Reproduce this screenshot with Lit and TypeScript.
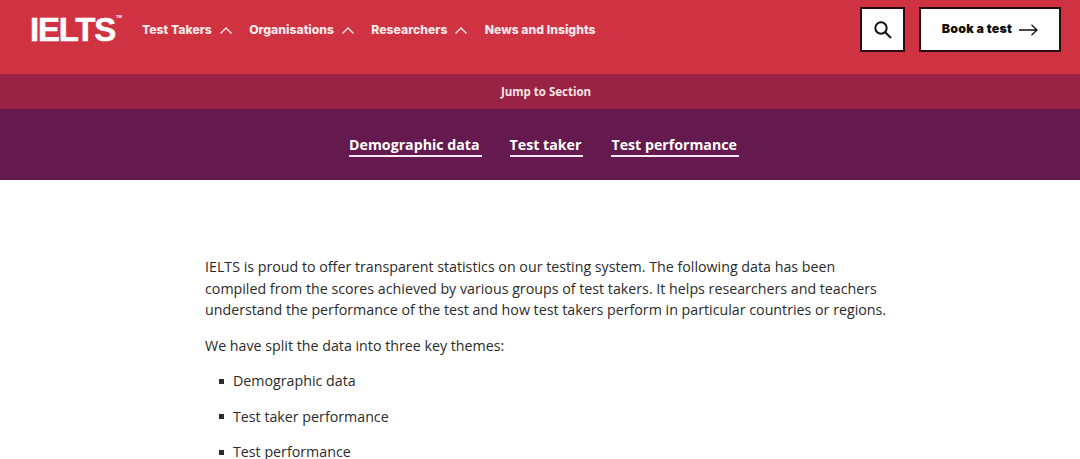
import { LitElement, html, css } from "lit";
import { customElement } from "lit/decorators.js";

const chevron = html`<svg class="chev" width="14" height="9" viewBox="0 0 14 9" fill="none" stroke="#fbe9ea" stroke-width="1.4"><path d="M1.5 7.5 7 2l5.500 5.500"/></svg>`;

@customElement("app-root")
export class AppRoot extends LitElement {
  static styles = css`
    :host { display: block; width: 1080px; height: 459px; overflow: hidden; background: #fff; font-family: "Open Sans", sans-serif; color: #2b2b2b; }
    .top { height: 74px; background: #cf3341; display: flex; align-items: center; padding: 0 19px 0 30px; box-sizing: border-box; }
    .logo { font: 700 33px/1 "Liberation Sans", sans-serif; color: #fff; -webkit-text-stroke: 0.5px #fff; letter-spacing: -1.2px; display: flex; align-items: flex-start; margin-top: -15px; width: 88px; }
    .logo sup { font-size: 4px; line-height: 1; letter-spacing: 0; margin: 2px 0 0 1px; -webkit-text-stroke: 0; }
    nav { display: flex; align-items: center; margin-left: 24px; margin-top: -13px; font: 800 12.200px/1 "Inter", sans-serif; color: #fbe9ea; }
    .item { display: flex; align-items: center; gap: 7px; margin-right: 16.300px; white-space: nowrap; }
    .spacer { flex: 1; }
    .btn { background: #fff; border: 2px solid #2c0a12; box-sizing: border-box; height: 45px; display: flex; align-items: center; justify-content: center; margin-top: -15px; }
    .search { width: 45px; margin-right: 14px; }
    .book { width: 142px; gap: 7px; font: 900 12.400px/1 "Inter", sans-serif; letter-spacing: 0.2px; color: #111; }
    .jump { height: 35px; background: #982344; color: #fbe3e6; display: flex; align-items: center; justify-content: center; font-weight: 700; font-size: 11.500px; padding-left: 12px; box-sizing: border-box; }
    .sections { height: 71px; background: #641a4e; display: flex; justify-content: center; align-items: center; gap: 28px; padding-left: 8px; box-sizing: border-box; margin: 0; }
    .sections a { color: #fff; font-weight: 700; font-size: 14.200px; line-height: 20px; border-bottom: 2px solid #fbe6f4; padding: 0 2px 0 0; margin-top: 2px; }
    main { padding: 76px 0 0 205px; font-size: 14.240px; line-height: 21.500px; }
    p { margin: 0 0 14.300px; white-space: nowrap; }
    ul { list-style: none; margin: 14px 0 0; padding: 0 0 0 14px; }
    li { display: flex; align-items: center; gap: 9px; height: 21px; margin-bottom: 14.500px; }
    li::before { content: ""; width: 5px; height: 5px; background: #2b2b2b; }
  `;

  render() {
    return html`
      <header class="top">
        <div class="logo">IELTS<sup>TM</sup></div>
        <nav>
          <span class="item">Test Takers ${chevron}</span>
          <span class="item">Organisations ${chevron}</span>
          <span class="item">Researchers ${chevron}</span>
          <span class="item">News and Insights</span>
        </nav>
        <div class="spacer"></div>
        <div class="btn search">
          <svg width="20" height="20" viewBox="0 0 20 20" fill="none" stroke="#111" stroke-width="2"><circle cx="8" cy="8" r="5.700"/><path d="M12.200 12.200 18 18"/></svg>
        </div>
        <div class="btn book">Book a test
          <svg width="19" height="12" viewBox="0 0 19 12" fill="none" stroke="#111" stroke-width="1.300"><path d="M0 6h18M12.500.7 18 6l-5.500 5.300"/></svg>
        </div>
      </header>
      <div class="jump">Jump to Section</div>
      <div class="sections">
        <a>Demographic data</a><a>Test taker</a><a>Test performance</a>
      </div>
      <main>
        <p>IELTS is proud to offer transparent statistics on our testing system. The following data has been<br>compiled from the scores achieved by various groups of test takers. It helps researchers and teachers<br>understand the performance of the test and how test takers perform in particular countries or regions.</p>
        <p>We have split the data into three key themes:</p>
        <ul>
          <li>Demographic data</li>
          <li>Test taker performance</li>
          <li>Test performance</li>
        </ul>
      </main>
    `;
  }
}
